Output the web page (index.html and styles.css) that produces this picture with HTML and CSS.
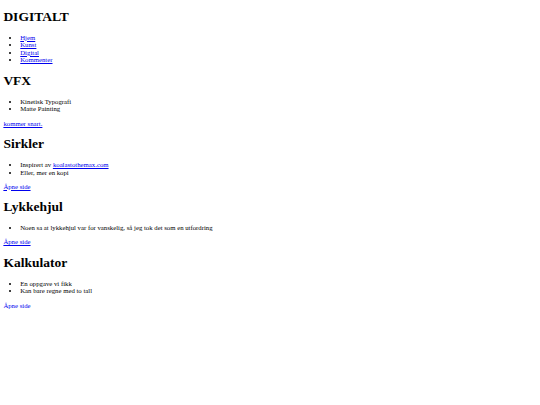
FILE: index.html
```html
<!DOCTYPE html>
<html lang="no">
<head>
<meta charset="utf-8">
<title>DIGITALT</title>
<link rel="stylesheet" href="styles.css">
</head>
<body>
<div class="page">
  <h1 class="title">DIGITALT</h1>
  <ul class="list">
    <li><a class="link" href="#hjem">Hjem</a></li>
    <li><a class="link" href="#kunst">Kunst</a></li>
    <li><a class="link" href="#digital">Digital</a></li>
    <li><a class="link" href="#kommenter">Kommenter</a></li>
  </ul>
  <h1 class="title">VFX</h1>
  <ul class="list">
    <li>Kinetisk Typografi</li>
    <li>Matte Painting</li>
  </ul>
  <a class="link" href="#vfx">kommer snart.</a>
  <h1 class="title">Sirkler</h1>
  <ul class="list">
    <li>Inspirert av <a class="link" href="#koala">koalastothemax.com</a></li>
    <li>Eller, mer en kopi</li>
  </ul>
  <a class="link" href="#sirkler">Åpne side</a>
  <h1 class="title">Lykkehjul</h1>
  <ul class="list">
    <li>Noen sa at lykkehjul var for vanskelig, så jeg tok det som en utfordring</li>
  </ul>
  <a class="link" href="#lykkehjul">Åpne side</a>
  <h1 class="title">Kalkulator</h1>
  <ul class="list">
    <li>En oppgave vi fikk</li>
    <li>Kan bare regne med to tall</li>
  </ul>
  <a class="link" href="#kalkulator">Åpne side</a>
</div>
</body>
</html>
```
FILE: styles.css
```css
html, body {
  margin: 0;
  padding: 0;
  background: #ffffff;
}
.page {
  padding: 0 3.375px;
  font-family: "Liberation Serif", "Times New Roman", serif;
  font-size: 6.75px;
  line-height: 7.594px;
  color: #000000;
  display: flow-root;
}
.title {
  font-size: 13.5px;
  line-height: 15.61px;
  font-weight: bold;
  margin: 9.045px 0;
}
.list {
  margin: 9.045px 0 6.75px;
  padding-left: 16.875px;
  list-style: disc;
}
.list li {
  line-height: 7.594px;
}
.link {
  color: #0000ee;
  text-decoration: underline;
}
```
